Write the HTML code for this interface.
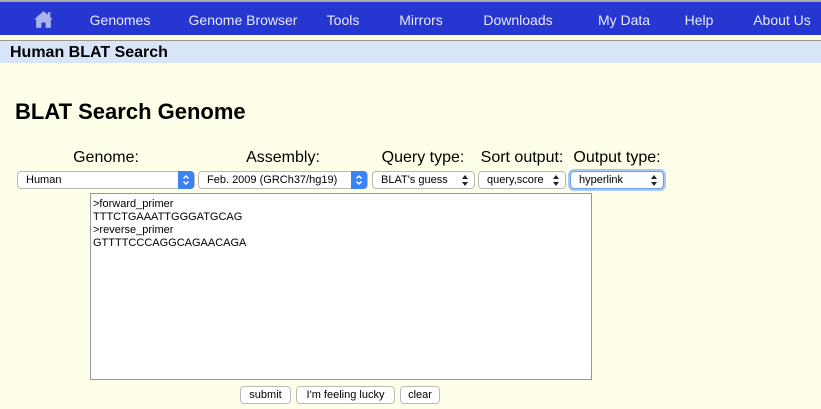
<!DOCTYPE html>
<html><head><style>
body{margin:0;width:821px;height:409px;background:#fffee8;font-family:"Liberation Sans",Arial,sans-serif;position:relative;overflow:hidden}
.a{position:absolute}
.nav{left:0;top:0;width:821px;height:35px;background:#2636d0;border-top:2px solid #aaa;box-sizing:border-box}
.nav span{position:absolute;top:10px;color:#e6e8ff;font-size:14px;transform:translateX(-50%);white-space:nowrap}
.hdr{left:0;top:40px;width:821px;height:23px;background:#d8e4f8;border-top:1px solid #999;box-sizing:border-box;font-weight:bold;font-size:16px;padding:3px 0 0 10px}
.lbl{font-size:16px;transform:translateX(-50%);top:149px;white-space:nowrap}
.sel{height:18px;top:171px;background:#fff;border:1px solid #b8b8b8;border-radius:4px;box-sizing:border-box;font-size:11px;padding:2px 0 0 8px}
.sel .ar{position:absolute;right:0;top:-1px;width:16px;height:18px;background:#3b82f6;border-radius:0 4px 4px 0}
.sel .ar2{position:absolute;right:6px;top:3px}
.btn{top:386px;height:18px;background:#fff;border:1px solid #bbb;border-radius:4px;box-sizing:border-box;font-size:11px;text-align:center;line-height:16px}
</style></head><body>
<div class="a nav">
<svg style="position:absolute;left:33px;top:8px" width="21" height="19" viewBox="0 0 20 18"><path d="M10 1 L1 9 L3 9 L3 17 L8 17 L8 12 L12 12 L12 17 L17 17 L17 9 L19 9 Z" fill="#aab2f0"/><rect x="14" y="2" width="2.5" height="5" fill="#aab2f0"/></svg>
<span style="left:120px">Genomes</span><span style="left:243px">Genome Browser</span><span style="left:343px">Tools</span><span style="left:421px">Mirrors</span><span style="left:518px">Downloads</span><span style="left:624px">My Data</span><span style="left:699px">Help</span><span style="left:782px">About Us</span>
</div>
<div class="a" style="left:0;top:35px;width:821px;height:5px;background:#fffde0"></div>
<div class="a hdr">Human BLAT Search</div>
<div class="a" style="left:15px;top:99px;font-size:22px;font-weight:bold">BLAT Search Genome</div>
<div class="a lbl" style="left:106px">Genome:</div>
<div class="a lbl" style="left:283px">Assembly:</div>
<div class="a lbl" style="left:423px">Query type:</div>
<div class="a lbl" style="left:522px">Sort output:</div>
<div class="a lbl" style="left:617px">Output type:</div>
<div class="a sel" style="left:17px;width:178px">Human<div class="ar"><svg width="16" height="18"><path d="M5.5 7.5 L8 5 L10.5 7.5 M5.5 10.5 L8 13 L10.5 10.5" stroke="#fff" stroke-width="1.5" fill="none"/></svg></div></div>
<div class="a sel" style="left:198px;width:170px">Feb. 2009 (GRCh37/hg19)<div class="ar"><svg width="16" height="18"><path d="M5.5 7.5 L8 5 L10.5 7.5 M5.5 10.5 L8 13 L10.5 10.5" stroke="#fff" stroke-width="1.5" fill="none"/></svg></div></div>
<div class="a sel" style="left:372px;width:103px">BLAT's guess<div class="ar2"><svg width="6" height="11"><path d="M0 4 L3 0 L6 4Z M0 7 L3 11 L6 7Z" fill="#222"/></svg></div></div>
<div class="a sel" style="left:478px;width:88px">query,score<div class="ar2"><svg width="6" height="11"><path d="M0 4 L3 0 L6 4Z M0 7 L3 11 L6 7Z" fill="#222"/></svg></div></div>
<div class="a sel" style="left:570px;width:94px;border:1px solid #6a9ee8;box-shadow:0 0 0 2px #a9c8f5">hyperlink<div class="ar2"><svg width="6" height="11"><path d="M0 4 L3 0 L6 4Z M0 7 L3 11 L6 7Z" fill="#222"/></svg></div></div>
<div class="a" style="left:90px;top:193px;width:502px;height:187px;background:#fff;border:1px solid #999;box-sizing:border-box;font-size:11px;line-height:13px;padding:4px 0 0 2px">&gt;forward_primer<br>TTTCTGAAATTGGGATGCAG<br>&gt;reverse_primer<br>GTTTTCCCAGGCAGAACAGA</div>
<div class="a btn" style="left:240px;width:51px">submit</div>
<div class="a btn" style="left:296px;width:99px">I'm feeling lucky</div>
<div class="a btn" style="left:400px;width:40px">clear</div>
</body></html>
